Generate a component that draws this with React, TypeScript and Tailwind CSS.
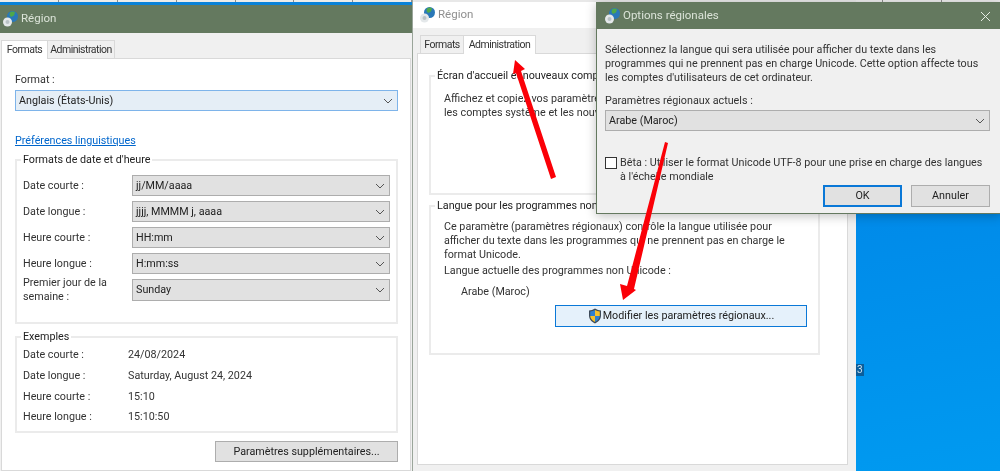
const UI_FONT = "font-['Roboto','Noto_Sans',sans-serif]"
const TAB_TEXT = 'text-[10.500px] tracking-[-0.5px]'

const LEFT_FORMATS = [
  { label: 'Date courte :', value: 'jj/MM/aaaa' },
  { label: 'Date longue :', value: 'jjjj, MMMM j, aaaa' },
  { label: 'Heure courte :', value: 'HH:mm' },
  { label: 'Heure longue :', value: 'H:mm:ss' },
]

const EXAMPLES = [
  { label: 'Date courte :', value: '24/08/2024' },
  { label: 'Date longue :', value: 'Saturday, August 24, 2024' },
  { label: 'Heure courte :', value: '15:10' },
  { label: 'Heure longue :', value: '15:10:50' },
]

const TASK_CELLS = Array.from({ length: 17 }, (_, i) => i)

function Chevron() {
  return (
    <svg width="10" height="6" viewBox="0 0 10 6" fill="none" stroke="#555" strokeWidth="1" aria-hidden="true">
      <path d="M1 1l4 4 4-4" />
    </svg>
  )
}

function Globe() {
  return (
    <svg width="18" height="18" viewBox="0 0 18 18" aria-hidden="true">
      <circle cx="10.5" cy="6.5" r="5.5" fill="#2a78b8" />
      <path d="M8 2.5c2-1.5 4-1 5 0l-1 3-3 1.5-1.5-2z" fill="#4fa84a" />
      <circle cx="5.5" cy="12" r="4.5" fill="#e4e8ea" />
      <circle cx="5.5" cy="12" r="2" fill="#b9c2c6" />
    </svg>
  )
}

function Shield() {
  return (
    <svg width="14" height="16" viewBox="0 0 14 16" className="shrink-0" aria-hidden="true">
      <path d="M7 .5C5 1.8 3 2.4 1 2.5v5c0 3.6 2.6 6.4 6 8 3.4-1.6 6-4.400 6-8v-5C11 2.400 9 1.800 7 .5z" fill="#3d4a58" />
      <path d="M7 2v6H2.200V3.500C3.900 3.300 5.500 2.800 7 2z" fill="#2f7fd0" />
      <path d="M7 2c1.500.8 3.100 1.300 4.800 1.500V8H7z" fill="#f5c02c" />
      <path d="M2.200 8H7v6.100C4.400 12.800 2.400 10.700 2.200 8z" fill="#f5c02c" />
      <path d="M7 8h4.800c-.2 2.700-2.200 4.800-4.800 6.100z" fill="#2f7fd0" />
    </svg>
  )
}

function Select({ value, className }: { value: string; className: string }) {
  return (
    <div className={`flex items-center justify-between border pl-[3px] pr-[4px] text-[#222] ${className}`}>
      <span className="whitespace-nowrap pt-[1px]">{value}</span>
      <Chevron />
    </div>
  )
}

function TitleBar({ title, className }: { title: string; className: string }) {
  return (
    <div className={`flex items-center gap-[1px] ${className}`}>
      <Globe />
      <span className="text-[11.500px]">{title}</span>
    </div>
  )
}

function GroupBox({ title, className, children }: { title: string; className: string; children: React.ReactNode }) {
  return (
    <fieldset className={`min-w-0 border-2 border-[#ebebeb] ${className}`}>
      <legend className="ml-[4px] whitespace-nowrap px-[2px] leading-[14px] text-[#222]">{title}</legend>
      {children}
    </fieldset>
  )
}

function LeftWindow() {
  return (
    <section className="absolute left-0 top-[2px] flex h-[469px] w-[412px] flex-col border-t-[3px] border-[#0a82d8] bg-[#f0f0f0]">
      <TitleBar title="Région" className="h-[28px] bg-[#64795f] pl-[2px] text-[#dbe3d8]" />
      <div className="flex h-[25px] items-end pl-[1px]">
        <div className={`z-10 -mb-px flex h-[19px] w-[47px] items-center justify-center border border-b-0 border-[#d9d9d9] bg-white ${TAB_TEXT}`}>Formats</div>
        <div className={`flex h-[18px] w-[67px] items-center justify-center whitespace-nowrap border border-b-0 border-l-0 border-[#d9d9d9] ${TAB_TEXT}`}>Administration</div>
      </div>
      <div className="mx-[1px] flex flex-1 flex-col border border-[#d9d9d9] bg-white px-[13px] pt-[13px]">
        <p className="leading-[16px]">Format :</p>
        <Select value="Anglais (États-Unis)" className="mt-[2px] h-[21px] w-[383px] border-[#7eb4ea] bg-[#e5eef6]" />
        <a className="mt-[22px] leading-[16px] text-[#0066cc] underline">Préférences linguistiques</a>
        <GroupBox title="Formats de date et d'heure" className="mt-[4px] h-[171px] w-[383px]">
          <div className="flex flex-col gap-[5px] pl-[6px] pr-[6px] pt-[8px]">
            {LEFT_FORMATS.map(({ label, value }) => (
              <div key={label} className="flex items-center">
                <span className="w-[109px] pt-[1px]">{label}</span>
                <Select value={value} className="h-[21px] flex-1 border-[#adadad] bg-[#e1e1e1]" />
              </div>
            ))}
            <div className="-mt-[3px] flex items-center">
              <span className="w-[109px] leading-[14px]">Premier jour de la semaine :</span>
              <Select value="Sunday" className="h-[22px] flex-1 border-[#adadad] bg-[#e1e1e1]" />
            </div>
          </div>
        </GroupBox>
        <GroupBox title="Exemples" className="mt-[6px] h-[103px] w-[383px]">
          <div className="flex flex-col pl-[6px] pt-[1px]">
            {EXAMPLES.map(({ label, value }) => (
              <div key={label} className="flex h-[20.700px] items-center">
                <span className="w-[105px]">{label}</span>
                <span>{value}</span>
              </div>
            ))}
          </div>
        </GroupBox>
        <button type="button" className="mt-[8px] ml-[200px] h-[21px] w-[183px] border border-[#adadad] bg-[#e1e1e1] pt-[1px] text-[#222]">
          Paramètres supplémentaires...
        </button>
      </div>
    </section>
  )
}

function MiddleWindow() {
  return (
    <section className="absolute left-[412px] top-0 flex h-[471px] w-[444px] flex-col border-l border-[#9aa59a] bg-[#f0f0f0]">
      <div className="h-[2px] bg-[#e8e8e8]" />
      <TitleBar title="Région" className="h-[26px] bg-white pl-[6px] text-[#8f8f8f]" />
      <div className="flex h-[25px] items-end pl-[7px]">
        <div className={`flex h-[18px] w-[43px] items-center justify-center border border-b-0 border-r-0 border-[#d9d9d9] ${TAB_TEXT}`}>Formats</div>
        <div className={`z-10 -mb-px flex h-[19px] w-[73px] items-center justify-center whitespace-nowrap border border-b-0 border-[#d9d9d9] bg-white ${TAB_TEXT}`}>Administration</div>
      </div>
      <div className="mx-[4px] mr-[8px] flex h-[412px] flex-col border border-[#d9d9d9] bg-white px-[11px] pt-[15px]">
        <GroupBox title="Écran d'accueil et nouveaux comptes d'utilisateurs" className="h-[126px] w-[391px]">
          <p className="whitespace-nowrap pl-[13px] pt-[9px] leading-[13.500px]">
            Affichez et copiez vos paramètres internationaux sur l'écran d'accueil,
            <br />
            les comptes système et les nouveaux comptes d'utilisateurs.
          </p>
        </GroupBox>
        <GroupBox title="Langue pour les programmes non Unicode" className="mt-[4px] h-[156px] w-[391px]">
          <div className="pl-[13px] pt-[7px]">
            <p className="whitespace-nowrap leading-[14px]">
              Ce paramètre (paramètres régionaux) contrôle la langue utilisée pour
              <br />
              afficher du texte dans les programmes qui ne prennent pas en charge le
              <br />
              format Unicode.
            </p>
            <p className="mt-[2px] leading-[14px]">Langue actuelle des programmes non Unicode :</p>
            <p className="mt-[7px] pl-[17px] leading-[14px]">Arabe (Maroc)</p>
            <button
              type="button"
              className="mt-[6px] ml-[111px] flex h-[22px] w-[252px] items-center justify-center gap-[1px] border border-[#0a78d7] bg-[#e5f1fb] text-[#222]"
            >
              <Shield />
              Modifier les paramètres régionaux...
            </button>
          </div>
        </GroupBox>
      </div>
    </section>
  )
}

function RegionalDialog() {
  return (
    <section className="absolute left-[596px] top-[2px] z-20 flex h-[212px] w-[405px] flex-col border border-[#64795f] bg-[#f0f0f0] shadow-[0_2px_10px_rgba(0,0,0,0.25)]">
      <div className="relative">
        <TitleBar title="Options régionales" className="h-[26px] bg-[#64795f] pl-[7px] text-[#dbe3d8]" />
        <svg width="11" height="11" viewBox="0 0 11 11" stroke="#e6ece4" className="absolute right-[9px] top-[8px]" aria-hidden="true">
          <path d="M1 1l9 9M10 1l-9 9" />
        </svg>
      </div>
      <div className="flex flex-1 flex-col pl-[8px] pr-[10px] pt-[14px]">
        <p className="whitespace-nowrap leading-[14px]">
          Sélectionnez la langue qui sera utilisée pour afficher du texte dans les
          <br />
          programmes qui ne prennent pas en charge Unicode. Cette option affecte tous
          <br />
          les comptes d'utilisateurs de cet ordinateur.
        </p>
        <p className="mt-[9px] leading-[14px]">Paramètres régionaux actuels :</p>
        <Select value="Arabe (Maroc)" className="mt-[2px] h-[21px] w-[385px] border-[#adadad] bg-[#e1e1e1]" />
        <div className="mt-[25px] flex gap-[3px]">
          <span className="mt-[1px] h-[12px] w-[12px] shrink-0 border border-[#333] bg-white" />
          <p className="whitespace-nowrap leading-[14px]">
            Bêta : Utiliser le format Unicode UTF-8 pour une prise en charge des langues
            <br />à l'échelle mondiale
          </p>
        </div>
        <div className="mt-[1px] flex justify-end gap-[9px]">
          <button type="button" className="h-[22px] w-[79px] border-2 border-[#0a78d7] bg-[#e1e1e1] text-[#222]">OK</button>
          <button type="button" className="h-[22px] w-[79px] border border-[#adadad] bg-[#e1e1e1] text-[#222]">Annuler</button>
        </div>
      </div>
    </section>
  )
}

function Arrows() {
  return (
    <svg width="1000" height="471" viewBox="0 0 1000 471" className="absolute inset-0 z-30" aria-hidden="true">
      <polygon points="556,177 551,179 516,73 513,74 515,60 525,69 521,71" fill="#fb0007" />
      <polygon points="665,142 668,143 634,289 636,290 623,300 620,284 627,286" fill="#fb0007" />
    </svg>
  )
}

export default function App() {
  return (
    <div className={`relative h-[471px] w-[1000px] overflow-hidden bg-[linear-gradient(170deg,#0094ee_0%,#0088e8_50%,#009af0_100%)] text-[10.750px] text-[#333] ${UI_FONT} blur-[0.35px]`}>
      <div className="absolute inset-x-0 top-0 flex h-[2px] bg-[#ececec]">
        {TASK_CELLS.map((cell) => (
          <span key={cell} className="h-full w-[58.900px] shrink-0 border-r border-[#8c8c8c]" />
        ))}
      </div>
      <LeftWindow />
      <MiddleWindow />
      <RegionalDialog />
      <span className="absolute left-[856px] top-[364px] bg-[#0b5d9a] px-[1px] text-[10px] leading-[12px] text-[#cfe2ee]">3</span>
      <Arrows />
    </div>
  )
}
